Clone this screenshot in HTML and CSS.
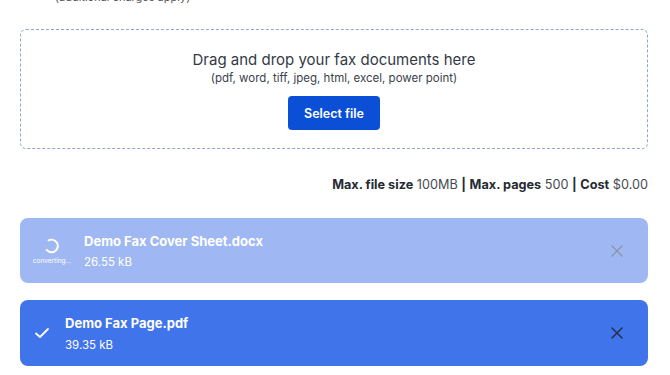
FILE: index.html
```html
<!DOCTYPE html>
<html lang="en">

<head>
    <meta charset="UTF-8">
    <meta name="viewport" content="width=device-width, initial-scale=1.0">
    <title>Send Fax - Upload</title>
    <link rel="stylesheet" href="styles.css">
</head>

<body>
    <div class="container">
        <p class="note">(additional charges apply)</p>

        <div class="drop-zone">
            <div class="drop-title">Drag and drop your fax documents here</div>
            <div class="drop-types">(pdf, word, tiff, jpeg, html, excel, power point)</div>
            <button class="select-btn">Select file</button>
        </div>

        <div class="limits">
            <b>Max. file size</b> 100MB <b class="sep">|</b> <b>Max. pages</b> 500 <b class="sep">|</b> <b>Cost</b> $0.00
        </div>

        <div class="file-card converting">
            <div class="status">
                <svg class="spinner" width="18" height="18" viewBox="0 0 18 18">
                    <path d="M5.6 3.4 A6.3 6.3 0 1 1 3.6 12.9" fill="none" stroke="#fff" stroke-width="1.9" stroke-linecap="round" />
                </svg>
                <span class="status-text">converting...</span>
            </div>
            <div class="file-info">
                <div class="file-name">Demo Fax Cover Sheet.docx</div>
                <div class="file-size">26.55 kB</div>
            </div>
            <svg class="remove" width="14" height="14" viewBox="0 0 14 14">
                <path d="M2 2 L12 12 M12 2 L2 12" stroke="currentColor" stroke-width="1.4" stroke-linecap="round" />
            </svg>
        </div>

        <div class="file-card done">
            <div class="status">
                <svg width="18" height="18" viewBox="0 0 18 18">
                    <path d="M3 9.5 L7 13 L15 5" fill="none" stroke="#fff" stroke-width="1.8" stroke-linecap="round" stroke-linejoin="round" />
                </svg>
            </div>
            <div class="file-info">
                <div class="file-name">Demo Fax Page.pdf</div>
                <div class="file-size">39.35 kB</div>
            </div>
            <svg class="remove" width="14" height="14" viewBox="0 0 14 14">
                <path d="M2 2 L12 12 M12 2 L2 12" stroke="currentColor" stroke-width="1.6" stroke-linecap="round" />
            </svg>
        </div>
    </div>
</body>

</html>
```

FILE: styles.css
```css
html {
    background-color: #fff;
    font-family: Inter, "Noto Sans", Arial, sans-serif;
}

body {
    margin: 0;
}

.container {
    width: 628px;
    margin-left: 20px;
}

.note {
    margin: -10px 0 0 0;
    padding-left: 35px;
    font-size: 11px;
    line-height: 15px;
    color: #555;
}

.drop-zone {
    margin-top: 24px;
    height: 120px;
    box-sizing: border-box;
    border: 1px dashed #8fa5d4;
    border-radius: 6px;
    padding-top: 20px;
    text-align: center;
}

.drop-title {
    font-size: 15px;
    line-height: 20px;
    color: #333a45;
}

.drop-types {
    font-size: 11.5px;
    line-height: 16px;
    color: #3c424d;
}

.select-btn {
    margin-top: 10px;
    width: 92px;
    height: 34px;
    border: none;
    border-radius: 4px;
    background-color: #0b4fd7;
    color: #fff;
    font-family: inherit;
    font-size: 12.5px;
    font-weight: 600;
}

.limits {
    margin-top: 27px;
    text-align: right;
    font-size: 12.7px;
    line-height: 18px;
    color: #454a52;
}

.limits b {
    color: #262b33;
    font-weight: 700;
}

.file-card {
    display: flex;
    align-items: center;
    gap: 13px;
    height: 65px;
    box-sizing: border-box;
    padding: 0 24px 0 13px;
    border-radius: 8px;
    color: #fff;
}

.converting {
    margin-top: 24px;
    background-color: #9fb8f4;
}

.done {
    margin-top: 17px;
    height: 66px;
    gap: 12px;
    background-color: #4074ea;
}

.status {
    display: flex;
    flex-direction: column;
    align-items: center;
}

.converting .status {
    width: 38px;
}

.done .status {
    width: 18px;
    margin-right: 2px;
}

.status-text {
    margin-top: 2px;
    font-size: 6.5px;
    line-height: 8px;
    white-space: nowrap;
}

.file-info {
    flex: 1;
}

.file-name {
    font-size: 13px;
    font-weight: 700;
    line-height: 18px;
}

.file-size {
    margin-top: 4px;
    font-size: 11.5px;
    line-height: 16px;
}

.done .file-size {
    margin-top: 5px;
}

.converting .remove {
    color: #8b94a9;
}

.done .remove {
    color: #263150;
}
```
